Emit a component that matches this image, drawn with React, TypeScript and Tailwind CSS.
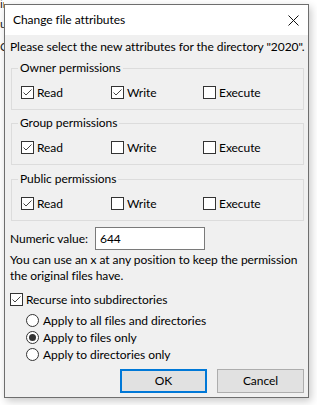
import React from "react";

const FONT = { fontFamily: "Lato, 'Liberation Sans', sans-serif" };

function CheckBox({ checked }: { checked: boolean }) {
  return (
    <span className="inline-flex w-[13px] h-[13px] shrink-0 border border-[#333333] bg-white items-center justify-center">
      {checked && (
        <svg width="11" height="11" viewBox="0 0 11 11">
          <polyline points="1.5,5.5 4,8 9.5,2.5" fill="none" stroke="#444444" strokeWidth="1" />
        </svg>
      )}
    </span>
  );
}

function Radio({ checked }: { checked: boolean }) {
  return (
    <span className="inline-flex w-[13px] h-[13px] shrink-0 rounded-full border border-[#333333] bg-white items-center justify-center">
      {checked && <span className="block w-[7px] h-[7px] rounded-full bg-[#333333]" />}
    </span>
  );
}

function CheckItem({ label, checked, width }: { label: string; checked: boolean; width: string }) {
  return (
    <div className={`flex items-center gap-[3px] h-[15px] ${width}`}>
      <CheckBox checked={checked} />
      <span>{label}</span>
    </div>
  );
}

function Group({ title, checks, mt }: { title: string; checks: boolean[]; mt: string }) {
  return (
    <fieldset className={`ml-[1px] border border-[#dcdcdc] p-0 pb-[9px] ${mt}`}>
      <legend className="ml-[6px] px-[2px] leading-[16px]">{title}</legend>
      <div className="flex pl-[9px] mt-[9px]">
        <CheckItem label="Read" checked={checks[0]} width="w-[90px]" />
        <CheckItem label="Write" checked={checks[1]} width="w-[92px]" />
        <CheckItem label="Execute" checked={checks[2]} width="w-[90px]" />
      </div>
    </fieldset>
  );
}

function RadioItem({ label, checked }: { label: string; checked: boolean }) {
  return (
    <div className="flex items-center gap-[4px] h-[17px] pl-[16px]">
      <Radio checked={checked} />
      <span>{label}</span>
    </div>
  );
}

export default function App() {
  return (
    <div className="w-[317px] h-[405px] bg-white flex overflow-hidden text-[12px] tracking-[-0.05px] text-black" style={FONT}>
      <div className="w-[4px] shrink-0 overflow-hidden text-[12px] leading-[20px] -mt-[6px] text-[#222]">
        <div className="whitespace-nowrap">ir</div>
        <div className="whitespace-nowrap">u</div>
        <div className="whitespace-nowrap mt-[3px]">Q</div>
      </div>
      <div className="mt-[4px] w-[305px] h-[394px] shrink-0 border border-[#6e6e6e] bg-[#f0f0f0] flex flex-col shadow-[2px_3px_8px_rgba(0,0,0,0.22)]">
        <div className="h-[30px] bg-white flex items-center justify-between pl-[8px] pr-[9px]">
          <span className="text-[12px]">Change file attributes</span>
          <svg width="11" height="11" viewBox="0 0 11 11">
            <path d="M0.5 0.5 L10.5 10.5 M10.5 0.5 L0.5 10.5" stroke="#111" strokeWidth="1" fill="none" />
          </svg>
        </div>
        <div className="flex flex-col pl-[5px] pr-[4px] pt-[4px] leading-[16px]">
          <div className="whitespace-nowrap">Please select the new attributes for the directory "2020".</div>
          <Group title="Owner permissions" checks={[true, true, false]} mt="mt-[5px]" />
          <Group title="Group permissions" checks={[true, false, false]} mt="mt-[5px]" />
          <Group title="Public permissions" checks={[true, false, false]} mt="mt-[6px]" />
          <div className="flex items-center h-[23px] mt-[6px]">
            <span className="w-[85px]">Numeric value:</span>
            <div className="w-[110px] h-[23px] border border-[#7a7a7a] bg-white pl-[4px] flex items-center">644</div>
          </div>
          <div className="mt-[2px]">
            <div>You can use an x at any position to keep the permission</div>
            <div>the original files have.</div>
          </div>
          <div className="flex items-center gap-[3px] h-[15px] mt-[8px]">
            <CheckBox checked={true} />
            <span>Recurse into subdirectories</span>
          </div>
          <div className="mt-[5px] flex flex-col">
            <RadioItem label="Apply to all files and directories" checked={false} />
            <RadioItem label="Apply to files only" checked={true} />
            <RadioItem label="Apply to directories only" checked={false} />
          </div>
          <div className="flex justify-end gap-[10px] mt-[6px]">
            <button className="w-[87px] h-[24px] border-2 border-[#0078d7] bg-[#e1e1e1] text-[12px]">OK</button>
            <button className="w-[87px] h-[24px] border border-[#adadad] bg-[#e1e1e1] text-[12px]">Cancel</button>
          </div>
        </div>
      </div>
    </div>
  );
}
